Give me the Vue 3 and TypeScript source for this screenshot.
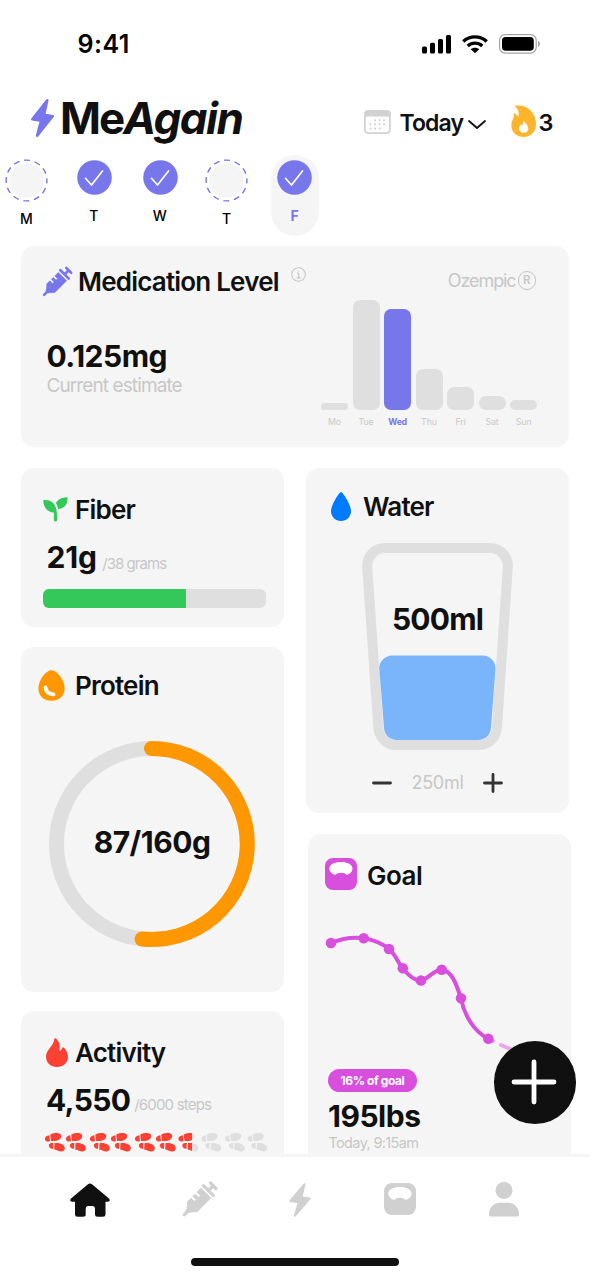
<script setup lang="ts">
interface Day { label: string; done: boolean; active?: boolean }
interface Dose { label: string; height: number; active?: boolean }

const days: Day[] = [
  { label: 'M', done: false },
  { label: 'T', done: true },
  { label: 'W', done: true },
  { label: 'T', done: false },
  { label: 'F', done: true, active: true },
]

const doses: Dose[] = [
  { label: 'Mo', height: 6.5 },
  { label: 'Tue', height: 109.5 },
  { label: 'Wed', height: 100.5, active: true },
  { label: 'Thu', height: 40.5 },
  { label: 'Fri', height: 22.5 },
  { label: 'Sat', height: 13.5 },
  { label: 'Sun', height: 9.5 },
]

const fiberPercent = (143 / 223) * 100

const steps: number[] = [0, 21, 45, 66, 90, 111, 133.5, 156.5, 180, 202.5]

const weights: [number, number][] = [
  [6, 11], [38.7, 6.2], [64, 17], [77.8, 36.3], [96, 48.5], [116.7, 37.7], [136, 66.3], [163.3, 106.8],
]

const boltPath = 'M16 1.2 L1.2 20 L9.9 21.4 L6 36.3 L21.4 17 L12.8 15.7 Z'
const scalePath = 'M8 0H24A8 8 0 0 1 32 8V24A8 8 0 0 1 24 32H8A8 8 0 0 1 0 24V8A8 8 0 0 1 8 0ZM10 17C13.5 14 18.500 14 22 17C26 15.500 27.500 13 27.500 10.300C27.500 6.500 22.500 4 16 4S4.300 6.500 4.300 10.300C4.300 13 6 15.500 10 17Z'
const barrelPath = 'M-12.500 -4.500L-10 -6.900H-5V-2.300H-2.400V-6.900H.7V-2.300H3.300V-6.900H9V6.900H-10.500L-13 4.500L-17 1.300V-1.300Z'
const plungerPath = 'M-21.500 0H-14M12.600 -7V7M12.600 0H19.500M19.500 -4V4'
</script>

<template>
  <div class="screen">
    <div class="status">
      <span class="clock">9:41</span>
      <div class="indicators">
        <svg class="signal" width="29" height="19" viewBox="0 0 29 19">
          <rect x="0" y="11.500" width="5" height="7" rx="1.500" /><rect x="8" y="7.700" width="5" height="10.800" rx="1.500" />
          <rect x="16" y="4" width="5" height="14.500" rx="1.500" /><rect x="24" y="0" width="5" height="18.500" rx="1.500" />
        </svg>
        <svg class="wifi" width="26" height="19" viewBox="0 0 26 19">
          <path class="arc" d="M1.300 6.500C8 .3 18 .3 24.700 6.500" /><path class="arc" d="M5.700 11C10 7.200 16 7.200 20.300 11" />
          <path d="M13 18.300L8.800 14.200C11 12.200 15 12.200 17.200 14.200Z" />
        </svg>
        <svg class="battery" width="42" height="20" viewBox="0 0 42 20">
          <rect class="shell" x=".6" y=".6" width="36.600" height="18.500" rx="5.500" />
          <rect x="3" y="3" width="31.800" height="13.700" rx="3.600" /><path class="nub" d="M39 7C41.600 7.600 41.600 12 39 12.700Z" />
        </svg>
      </div>
    </div>

    <header class="header">
      <svg class="logo-bolt" width="23" height="38" viewBox="0 0 22.600 37.600"><path :d="boltPath" /></svg>
      <h1 class="logo">Me<em>Again</em></h1>
      <svg class="calendar" width="27" height="24" viewBox="0 0 27 24">
        <rect class="page" x=".9" y=".9" width="25" height="22.200" rx="3" />
        <path class="page-top" d="M.5 6.400V4Q.5.500 4 .5H23Q26.500.500 26.500 4V6.400Z" />
        <path class="dots" d="M11 10.200h.1M15.500 10.200h.1M20 10.200h.1M6.500 14.300h.1M11 14.300h.1M15.500 14.300h.1M20 14.300h.1M6.500 18.500h.1M11 18.500h.1M15.500 18.500h.1" />
      </svg>
      <span class="today">Today</span>
      <svg class="chevron" width="18" height="9" viewBox="0 0 18 9"><path d="M1 1L9 8L17 1" /></svg>
      <svg class="streak-icon" width="25" height="32" viewBox="0 0 25 32">
        <path d="M3.700.800C14-1.500 25 6 25 19C25 27 19.500 32 12.500 32C5.500 32 .3 27 .3 20.500C.3 17 1.800 14.500 2.600 12.500C2.800 11 2.500 9.500 3 8L7.500 11.500C8.500 8 7 4 3.700.800Z" />
        <path class="core" d="M12.500 15C13.500 18 17.300 20 17.300 23.600C17.300 26.500 15 28 12.500 28S8 26 8 23.300C8 21.500 9 20.500 9.800 19.500L11 20.800C12 19 12.600 17.500 12.500 15Z" />
      </svg>
      <span class="streak">3</span>
    </header>

    <div class="days">
      <div v-for="(day, i) in days" :key="i" class="day" :class="{ open: !day.done, active: day.active }">
        <svg v-if="day.done" width="35" height="35" viewBox="0 0 35 35">
          <circle class="disc" cx="17.500" cy="17.500" r="17.300" /><path class="tick" d="M8.500 18.300L14.500 25L25.500 11" />
        </svg>
        <svg v-else width="43" height="43" viewBox="0 0 43 43">
          <circle class="blank" cx="21.500" cy="21.500" r="17.300" /><circle class="dashes" cx="21.500" cy="21.500" r="20.400" />
        </svg>
        <span>{{ day.label }}</span>
      </div>
    </div>

    <main class="content">
      <section class="card medication">
        <div class="med-info">
          <div class="title">
            <svg class="syringe" width="28" height="28" viewBox="0 0 33 33">
              <g transform="translate(16.500 16.500) rotate(-45)"><path :d="barrelPath" /><path class="rod" :d="plungerPath" /></g>
            </svg>
            <h2>Medication Level</h2>
            <svg class="info" width="15" height="15" viewBox="0 0 15 15"><circle cx="7.500" cy="7.500" r="6.800" /><path d="M6 6.300H7.700V10.800M5.800 10.900H9.500M7.400 3.700V4.700" /></svg>
          </div>
          <strong class="value dose">0.125mg</strong>
          <span class="note estimate">Current estimate</span>
        </div>
        <div class="med-chart">
          <div class="brand"><span>Ozempic</span><i>R</i></div>
          <div class="bars">
            <div v-for="dose in doses" :key="dose.label" class="bar-col" :class="{ active: dose.active }">
              <div class="bar" :style="{ height: dose.height + 'px' }"></div>
              <span>{{ dose.label }}</span>
            </div>
          </div>
        </div>
      </section>

      <div class="columns">
        <div class="column">
          <section class="card fiber">
            <div class="title">
              <svg class="sprout" width="25" height="25" viewBox="0 0 25 25">
                <path d="M.2 3.200C6 2.300 12 5 13.300 12.500C14 15 14 18 14 23Q14 24.500 12.400 24.500Q10.900 24.500 10.900 23V15.500C5 15.500.500 11 .2 3.200Z" />
                <path d="M24.600.200C24.800 7 21.500 11.800 15 12C14.700 9.500 14 7.800 12.900 6.200C15 2 19 .3 24.600.200Z" />
              </svg>
              <h2>Fiber</h2>
            </div>
            <div class="reading"><strong class="value">21g</strong><span class="note small">/38 grams</span></div>
            <div class="track"><div class="fill" :style="{ width: fiberPercent + '%' }"></div></div>
          </section>

          <section class="card protein">
            <div class="title">
              <svg class="egg" width="27" height="31" viewBox="0 0 27 31">
                <path d="M13.500.200C19 .2 26.600 10 26.600 18.500C26.600 26 21 30.800 13.500 30.800S.4 26 .4 18.500C.4 10 8 .2 13.500.200Z" /><path class="shine" d="M7.500 17.500C8 21.500 11 24 15.500 24.300" />
              </svg>
              <h2>Protein</h2>
            </div>
            <div class="ring">
              <svg width="206" height="206" viewBox="0 0 206 206">
                <circle class="ring-track" cx="103" cy="103" r="95.500" />
                <path class="ring-fill" d="M102.500 7.500A95.500 95.500 0 1 1 93 198" />
              </svg>
              <strong class="value">87/160g</strong>
            </div>
          </section>

          <section class="card activity">
            <div class="title">
              <svg class="flame" width="22" height="29" viewBox="0 0 22 29"><path d="M8.300.900C8.300 0 9.300 0 10 .6C13.500 3.600 14.300 8.500 13.400 13.200C14.600 12.800 15.400 11.500 16.100 9.900C16.500 9 17.300 8.900 18 9.700C20.500 12.300 22 15.500 22 19C22 25 17 29 11 29S0 25 0 18.500C0 11.500 7.500 8.500 8.300.900Z" /></svg>
              <h2>Activity</h2>
            </div>
            <div class="reading"><strong class="value">4,550</strong><span class="note small">/6000 steps</span></div>
            <svg class="steps" width="226" height="20" viewBox="0 0 226 20">
              <defs>
                <linearGradient id="walked" gradientUnits="userSpaceOnUse" x1="0" y1="0" x2="226" y2="0">
                  <stop offset=".652" stop-color="#fb4133" /><stop offset=".652" stop-color="#dfdfdf" />
                </linearGradient>
                <mask id="prints" maskUnits="userSpaceOnUse" x="0" y="0" width="226" height="20">
                  <g v-for="x in steps" :key="x" fill="#fff" :transform="`translate(${x} 0)`">
                    <path d="M-.1 6.500C.2 4.300 2.800 3.600 4.300 3.300L5 8.900C3 10 -.3 9.700 -.1 6.500Z" />
                    <path d="M5.200 2.800C7 1 10 .9 12.500 .9C16.300 1 17.300 4.600 15 6.900C13 8.900 9 9.200 6 9Z" />
                    <path d="M4 12.600C5 10.900 7 10.900 8.300 11.100L8 17C5.500 17 3.300 15.200 4 12.600Z" />
                    <path d="M9.500 11.100C12 10.600 15.500 10.900 17.700 12.500C20.700 14.600 20.500 18.900 17 19.500C14.500 20 12.500 18.200 9.200 17.600Z" />
                  </g>
                </mask>
              </defs>
              <rect width="226" height="20" fill="url(#walked)" mask="url(#prints)" />
            </svg>
          </section>
        </div>

        <div class="column">
          <section class="card water">
            <div class="title">
              <svg class="drop" width="20" height="29" viewBox="0 0 20 29"><path d="M10 0C11.800 0 20 13 20 19C20 25 15.500 29 10 29S0 25 0 19C0 13 8.200 0 10 0Z" /></svg>
              <h2>Water</h2>
            </div>
            <div class="glass">
              <svg width="151" height="207" viewBox="0 0 151 207">
                <path class="rim" d="M23 5H128C138.500 5 146.500 14 145.800 24L135 184C134.300 194 127 202 117 202H34C24 202 17 194 16.300 184L5.200 24C4.500 14 12.500 5 23 5Z" />
                <path class="liquid" d="M30 112.500H121C128.500 112.500 134 119 133.500 126L129 185C128.500 192 123 197 116 197H35C28 197 22.500 192 22 185L17.300 126C16.800 119 22.500 112.500 30 112.500Z" />
              </svg>
              <strong class="value">500ml</strong>
            </div>
            <div class="stepper">
              <svg width="20" height="20" viewBox="0 0 20 20"><path d="M1.500 10H18.500" /></svg>
              <span class="note">250ml</span>
              <svg width="20" height="20" viewBox="0 0 20 20"><path d="M1.500 10H18.500M10 1.500V18.500" /></svg>
            </div>
          </section>

          <section class="card goal">
            <div class="title">
              <svg class="scale" width="32" height="32" viewBox="0 0 32 32"><rect x="3" y="3" width="26" height="16" /><path fill-rule="evenodd" :d="scalePath" /></svg>
              <h2>Goal</h2>
            </div>
            <svg class="trend" width="220" height="130" viewBox="0 0 220 130">
              <path class="line" d="M6 11C18 6 30 5 38.700 6.200C50 8 58 12 64 17C71 23 73 31 77.800 36.300C83 43 89 49 96 48.500C104 47 109 37 116.700 37.700C128 39 132 55 136 66.300C139 82 148 99 163.300 106.800" />
              <path class="forecast" d="M165 107.500L168 109M176 113L190 119M198 122L212 128" />
              <circle v-for="(w, i) in weights" :key="i" :cx="w[0]" :cy="w[1]" r="5.300" />
            </svg>
            <span class="badge">16% of goal</span>
            <strong class="value weight">195lbs</strong>
            <span class="note logged">Today, 9:15am</span>
          </section>
        </div>
      </div>
    </main>

    <nav class="nav">
      <svg class="home" width="40" height="34" viewBox="0 0 40 34"><path d="M18 1.200Q20-.3 22 1.200L39 15.500Q40.300 17 39.500 18Q39 18.700 37.500 18.700H35.500V31.500Q35.500 33.700 33 33.700H27.500Q25 33.700 25 31.500V25.500Q25 23 22.700 23H18Q15.700 23 15.700 25.500V31.500Q15.700 33.700 13 33.700H7.500Q5 33.700 5 31.500V18.700H2.500Q1 18.700.500 18Q-.3 17 1 15.500Z" /></svg>
      <svg class="syringe" width="33" height="33" viewBox="0 0 33 33">
        <g transform="translate(16.500 16.500) rotate(-45)"><path :d="barrelPath" /><path class="rod" :d="plungerPath" /></g>
      </svg>
      <svg class="bolt" width="22" height="34" viewBox="0 0 22.600 37.600" preserveAspectRatio="none"><path :d="boltPath" /></svg>
      <svg class="scale" width="32" height="32" viewBox="0 0 32 32"><path fill-rule="evenodd" :d="scalePath" /></svg>
      <svg class="person" width="30" height="35" viewBox="0 0 30 35"><circle cx="15" cy="8.500" r="8.500" /><path d="M0 32.500C0 25 5 20.700 11 20.700H19C25 20.700 30 25 30 32.500Q30 34.500 28.500 34.500H1.500Q0 34.500 0 32.500Z" /></svg>
    </nav>
    <div class="home-indicator"></div>

    <button class="fab" aria-label="Add">
      <svg width="46" height="46" viewBox="0 0 46 46"><path d="M3 23H43M23 3V43" /></svg>
    </button>
  </div>
</template>

<style>
body { margin: 0; background: #fff; }
</style>

<style scoped>
.screen {
  position: relative;
  box-sizing: border-box;
  width: 590px;
  height: 1278px;
  display: flex;
  flex-direction: column;
  overflow: hidden;
  background: #fff;
  color: #101010;
  font-family: Inter, "Liberation Sans", sans-serif;
  white-space: nowrap;
}
svg { display: block; flex: none; overflow: visible; }
h1, h2 { margin: 0; }
.status { display: flex; justify-content: space-between; align-items: center; height: 88px; padding: 0 49px 0 77.500px; box-sizing: border-box; color: #000; }
.clock { font-size: 25px; font-weight: 600; letter-spacing: .5px; }
.indicators { display: flex; align-items: center; }
.wifi { margin-left: 11px; }
.wifi .arc { fill: none; stroke: #000; stroke-width: 3.400; }
.battery { margin-left: 11px; }
.shell { fill: none; stroke: #a5a5a5; stroke-width: 1.200; }
.nub { fill: #a5a5a5; }

.header { display: flex; align-items: center; height: 60px; padding-left: 31px; }
.logo-bolt { fill: #7876eb; stroke: #7876eb; stroke-width: 2.600; stroke-linejoin: round; }
.logo { width: 304px; margin-left: 6px; box-sizing: border-box; font-size: 44px; line-height: 60px; font-weight: 700; letter-spacing: -2px; }
.logo em { letter-spacing: -1.500px; }
.calendar { margin-top: 7px; }
.page { fill: #fff; stroke: #d2d2d2; stroke-width: 1.700; }
.page-top { fill: #d2d2d2; }
.dots { stroke: #cfcfcf; stroke-width: 2; stroke-linecap: round; }
.today { width: 64px; margin: 9px 0 0 8.500px; font-size: 23px; font-weight: 600; letter-spacing: -.9px; }
.chevron { margin: 13px 0 0 4.500px; fill: none; stroke: #101010; stroke-width: 1.800; stroke-linecap: round; stroke-linejoin: round; }
.streak-icon { margin: 6px 0 0 25px; fill: #ffb42b; }
.core { fill: #fff; }
.streak { margin: 9px 0 0 2.500px; font-size: 23.500px; font-weight: 600; }

.days { display: flex; align-items: flex-start; height: 98px; padding: 7px 0 0 2.500px; box-sizing: border-box; }
.day { display: flex; flex-direction: column; align-items: center; width: 48px; height: 81px; padding-top: 5px; margin-right: 18px; box-sizing: border-box; border-radius: 24px; font-size: 14px; font-weight: 500; color: #000; }
.day.open { padding-top: 4px; margin-right: 20px; }
.day span { margin: 11.500px 1.500px 0 0; line-height: 17px; }
.day.open span { margin-top: 7.500px; margin-right: 0; }
.day.active { margin-left: 0; background: #f5f5f5; color: #7876eb; font-weight: 700; }
.day.active span { margin: 11.500px 0 0; }
.disc { fill: #7876eb; }
.tick { fill: none; stroke: #fff; stroke-width: 1.700; stroke-linecap: round; stroke-linejoin: round; }
.blank { fill: #f5f5f5; }
.dashes { fill: none; stroke: #7876eb; stroke-width: 1.400; stroke-dasharray: 6 4.680; stroke-dashoffset: 3; }

.content { flex: none; height: 908px; padding: 0 20px 0 21px; box-sizing: border-box; overflow: hidden; }
.card { box-sizing: border-box; border-radius: 13px; background: #f5f5f5; }
.title { display: flex; align-items: center; height: 36px; }
h2 { font-size: 26px; line-height: 36px; font-weight: 600; letter-spacing: -.8px; }
.value { font-size: 30px; line-height: 36px; font-weight: 700; letter-spacing: -.5px; }
.note { color: #c7c7c7; font-weight: 400; }

.medication { display: flex; width: 547.500px; height: 200.500px; }
.med-info { display: flex; flex-direction: column; width: 300px; padding: 17.500px 0 0 22px; box-sizing: border-box; }
.syringe .rod { fill: none; stroke-width: 3.200; stroke-linecap: round; }
.medication .syringe { margin-right: 7px; fill: #7876eb; stroke: #7876eb; stroke-width: .8; stroke-linejoin: round; }
.info { margin: 0 0 14px 12px; fill: none; stroke: #c7c7c7; stroke-width: 1.100; }
.dose { margin: 38px 0 0 3.500px; }
.estimate { margin: 0 0 0 3.500px; font-size: 19px; line-height: 24px; letter-spacing: -.9px; }
.med-chart { width: 216px; }
.brand { display: flex; justify-content: flex-end; align-items: center; height: 24px; margin: 22.500px 1px 19px 0; color: #c7c7c7; font-size: 18px; letter-spacing: -1.100px; gap: 2px; }
.brand i { box-sizing: border-box; width: 18.500px; height: 18.500px; border: 1.600px solid #c4c4c4; border-radius: 50%; font: 600 11.500px/17px Inter, sans-serif; letter-spacing: 0; text-align: center; }
.bars { display: flex; gap: 4.500px; height: 116px; align-items: flex-end; }
.bar-col { width: 27px; font-size: 8.800px; line-height: 12px; color: #c9c9c9; letter-spacing: -.1px; text-align: center; }
.bar { margin-bottom: 6px; border-radius: 7px; background: #dfdfdf; }
.bar-col.active { color: #7876eb; font-weight: 700; letter-spacing: -.4px; }
.bar-col.active .bar { background: #7876eb; }
.bar-col span { display: block; }

.columns { display: flex; gap: 22px; margin-top: 21.500px; }
.column { display: flex; flex-direction: column; width: 263px; }
.reading { display: flex; align-items: center; }
.small { font-size: 15px; line-height: 20px; margin: 14px 0 0 5.500px; letter-spacing: -.95px; }
.fiber { height: 159px; padding: 23.500px 18px 0 22px; }
.fiber .title { gap: 7px; }
.sprout { fill: #34c759; }
.fiber .reading { margin: 11px 0 14.500px 3.500px; }
.fiber .value { letter-spacing: -.2px; }
.track { height: 18.500px; border-radius: 6px; background: #dfdfdf; overflow: hidden; }
.fill { height: 100%; background: #34c759; }
.protein { height: 345px; margin-top: 19.500px; padding: 21px 0 0 17px; }
.protein .title { gap: 10px; }
.egg { fill: #ff9800; }
.shine { fill: none; stroke: #fff; stroke-width: 3.800; stroke-linecap: round; }
.ring { display: grid; place-items: center; width: 206px; margin: 37px 0 0 11px; }
.ring > *, .glass > * { grid-area: 1 / 1; }
.ring-track { fill: none; stroke: #dfdfdf; stroke-width: 15; }
.ring-fill { fill: none; stroke: #ff9800; stroke-width: 15; stroke-linecap: round; }
.ring .value { margin-top: -3px; }
.activity { height: 200px; margin-top: 19.500px; padding: 23.500px 0 0 25px; }
.activity .title { gap: 7px; }
.flame { fill: #fb4133; }
.activity .reading { margin-top: 11px; }
.activity .value { letter-spacing: -.7px; }
.activity .small { margin: 11px 0 0 4px; letter-spacing: -.8px; }
.steps { margin: 14px 0 0 -1px; }

.water { height: 345px; padding: 20.500px 0 0 25px; }
.water .title { gap: 12px; }
.drop { fill: #007aff; }
.glass { display: grid; place-items: center; width: 151px; margin: 18.500px 0 0 31px; }
.glass .value { margin-bottom: 56px; letter-spacing: -.8px; }
.rim { fill: none; stroke: #dfdfdf; stroke-width: 10; }
.liquid { fill: #7ab5fb; }
.stepper { display: flex; align-items: center; width: 131px; margin: 23px 0 0 41px; justify-content: space-between; font-size: 18px; line-height: 20px; letter-spacing: -.3px; }
.stepper svg { stroke: #333; stroke-width: 2.800; stroke-linecap: round; }
.goal { display: flex; flex-direction: column; align-items: flex-start; width: 262.500px; height: 345px; margin: 21px 0 0 2px; padding: 23.500px 0 0 17px; }
.goal .title { gap: 10px; }
.goal h2 { letter-spacing: -.5px; }
.goal .scale { margin-top: -4px; fill: #d84fdd; }
.goal .scale rect { fill: #fff; }
.trend { margin: 38px 0 0; fill: #d84fdd; }
.line { fill: none; stroke: #d84fdd; stroke-width: 4; }
.forecast { fill: none; stroke: #e9a6eb; stroke-width: 4; stroke-linecap: round; }
.badge { width: 89px; height: 23px; margin: 7px 0 0 3px; border-radius: 12px; background: #d84fdd; color: #fff; font-size: 12px; line-height: 23px; font-weight: 700; letter-spacing: -.4px; text-align: center; }
.weight { margin: 6px 0 0 3px; }
.logged { margin: 0 0 0 3.500px; font-size: 14.500px; line-height: 17px; letter-spacing: -.65px; }

.nav { flex: none; display: flex; align-items: flex-start; height: 104px; padding: 26px 0 0 70px; box-sizing: border-box; border-top: 3px solid #f5f5f5; background: #fff; fill: #d0d0d0; }
.nav .home { fill: #101010; }
.nav .syringe { margin: 0 0 0 73px; stroke: #d0d0d0; stroke-width: .8; stroke-linejoin: round; }
.nav .bolt { margin: 0 0 0 73px; stroke: #d0d0d0; stroke-width: 2; stroke-linejoin: round; }
.nav .scale { margin: 0 0 0 73px; }
.nav .person { margin: -1px 0 0 73px; }
.home-indicator { width: 208.500px; height: 8px; margin: 0 0 0 190.500px; border-radius: 4px; background: #101010; }
.fab { position: absolute; left: 493.500px; top: 1041px; display: grid; place-items: center; width: 82.500px; height: 82.500px; padding: 0 2.500px 0 0; border: 0; border-radius: 50%; background: #101010; }
.fab svg { stroke: #fff; stroke-width: 4.800; stroke-linecap: round; }
</style>
